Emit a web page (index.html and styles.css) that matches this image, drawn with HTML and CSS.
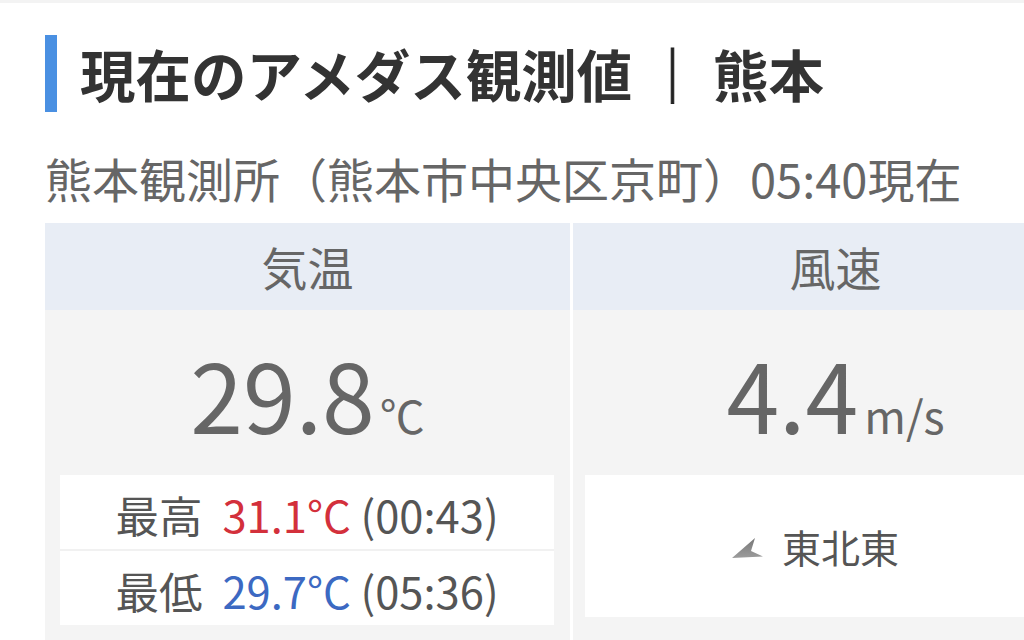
FILE: index.html
```html
<!DOCTYPE html>
<html lang="ja">
<head>
<meta charset="utf-8">
<title>現在のアメダス観測値 | 熊本</title>
<link rel="stylesheet" href="styles.css">
</head>
<body>
<div class="topband"></div>
<h1 class="title">現在のアメダス観測値 <span class="sep">｜</span> 熊本</h1>
<p class="sub">熊本観測所（熊本市中央区京町）05:40現在</p>
<div class="grid">
  <section class="col">
    <div class="head">気温</div>
    <div class="body">
      <div class="val">29.8<span class="unit">℃</span></div>
      <div class="box">
        <div class="row"><span class="lbl">最高</span><span class="hi">31.1°C</span> (00:43)</div>
        <div class="row"><span class="lbl">最低</span><span class="lo">29.7°C</span> (05:36)</div>
      </div>
    </div>
  </section>
  <section class="col">
    <div class="head">風速</div>
    <div class="body">
      <div class="val">4.4<span class="unit ms">m/s</span></div>
      <div class="box wind">
        <svg class="arrow" width="32" height="23" viewBox="0 0 32 23" aria-hidden="true">
          <defs>
            <linearGradient id="ag" x1="0" y1="0" x2="0" y2="1">
              <stop offset="0" stop-color="#777"/>
              <stop offset="1" stop-color="#9c9c9c"/>
            </linearGradient>
          </defs>
          <polygon points="0,21 23,1 19,14 31,19.5" fill="url(#ag)"/>
        </svg>
        <span class="dir">東北東</span>
      </div>
    </div>
  </section>
</div>
</body>
</html>
```
FILE: styles.css
```css
html, body {
  margin: 0;
  padding: 0;
  background: #ffffff;
  overflow: hidden;
}
body {
  width: 1024px;
  height: 640px;
  font-family: "Noto Sans CJK JP", "Noto Sans", sans-serif;
  color: #666;
}
.topband {
  height: 3px;
  background: #f3f3f3;
}
.title {
  margin: 32px 0 0 45px;
  padding-left: 23px;
  border-left: 12px solid #4a90e2;
  height: 77px;
  line-height: 77px;
  font-size: 55.5px;
  font-weight: 700;
  color: #333;
  white-space: nowrap;
}
.sep {
  color: #222;
  -webkit-text-stroke: 1px #222;
}
.sub {
  margin: 36px 0 0 45px;
  height: 60px;
  line-height: 60px;
  font-size: 47px;
  color: #666;
  white-space: nowrap;
}
.grid {
  margin: 15px 0 0 45px;
  display: grid;
  grid-template-columns: 525px 525px;
  column-gap: 3px;
  width: 1053px;
  background: #fff;
}
.col {
  background: #f4f4f4;
  height: 420px;
}
.head {
  height: 87px;
  line-height: 87px;
  text-align: center;
  background: #e8edf5;
  font-size: 46px;
  color: #666;
}
.val {
  box-sizing: border-box;
  height: 165px;
  padding-top: 35px;
  line-height: 95px;
  font-size: 95px;
  text-align: center;
  color: #666;
  white-space: nowrap;
}
.unit {
  font-size: 45px;
  margin-left: 5px;
}
.unit.ms {
  margin-left: 6px;
}
.box {
  margin: 0 16px 0 15px;
  background: #fff;
}
.row {
  box-sizing: border-box;
  height: 74px;
  line-height: 68px;
  padding-top: 6px;
  text-align: center;
  font-size: 43.5px;
  color: #555;
  white-space: nowrap;
}
.row + .row {
  border-top: 2px solid #f1f1f1;
  height: 76px;
}
.lbl {
  margin-right: 20px;
}
.hi {
  color: #d3303b;
}
.lo {
  color: #3c69c2;
}
.wind {
  margin: 0 0 0 12px;
  height: 142px;
  display: flex;
  align-items: center;
  justify-content: center;
  gap: 18px;
  padding-right: 52px;
}
.arrow {
  display: block;
  margin-top: 4px;
}
.dir {
  font-size: 39px;
  color: #555;
}
```
